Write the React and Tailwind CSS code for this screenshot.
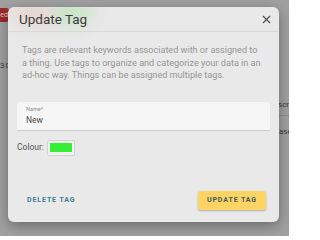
import { X } from 'lucide-react'

// Dialog "Update Tag" shown over a dimmed tag list
export default function App() {
  return (
    <div
      className="relative w-[289px] h-[236px] overflow-hidden bg-[#a1a1a1]"
      style={{ fontFamily: 'Roboto, "Liberation Sans", sans-serif' }}
    >
      {/* dimmed page behind */}
      <div className="flex items-start gap-[14px] pt-[8px]">
        <div className="w-[9px] h-[14px] rounded-r-[3px] bg-[#9c2a2a] text-[7px] leading-[14px] text-[#e7c9c9] text-right pr-[1px] overflow-hidden">
          ed
        </div>
        <div className="w-[30px] h-[14px] rounded-[4px] bg-[#b77a5a]" />
        <div className="w-[22px] h-[14px] rounded-[4px] bg-[#5fb45f] ml-[1px]" />
      </div>
      <div className="mt-[40px] text-[8px] leading-none text-[#3a3a3a] tracking-[1px]">30</div>
      <div className="absolute right-0 top-[101px] w-[10px] overflow-hidden text-[8px] text-[#3a3a3a] leading-none">
        <div className="-ml-[1px] whitespace-nowrap">scri</div>
        <div className="mt-[6px] h-px bg-[#8e8e8e]" />
        <div className="mt-[12px] whitespace-nowrap">ase</div>
      </div>

      {/* dialog */}
      <div className="absolute left-[8px] top-[7px] w-[271px] h-[215px] rounded-[6px] bg-[#e9e9e9] shadow-[0_4px_14px_rgba(0,0,0,0.35)] flex flex-col overflow-hidden">
        <div className="absolute left-[45px] -top-[10px] w-[40px] h-[30px] rounded-full bg-[#aee0a8] opacity-50 blur-[8px]" />
        <div className="absolute left-[5px] -top-[6px] w-[40px] h-[24px] rounded-full bg-[#e0b8a8] opacity-40 blur-[8px]" />
        <div className="relative h-[25px] flex items-center justify-between pl-[11px] pr-[6px] border-b border-[#d9d9d9]">
          <span className="text-[13.5px] leading-none text-[#3b3b3b] pt-[2px]">Update Tag</span>
          <X size={13} strokeWidth={2} className="text-[#4a4a4a] mt-[1px]" />
        </div>

        <p className="relative pt-[12px] px-[14px] text-[9.1px] leading-[12.5px] text-[#969696] whitespace-nowrap">
          Tags are relevant keywords associated with or assigned to
          <br />
          a thing. Use tags to organize and categorize your data in an
          <br />
          ad-hoc way. Things can be assigned multiple tags.
        </p>

        <div className="relative mt-[20px] mx-[9px] h-[29px] bg-[#f6f6f6] rounded-t-[3px] border-b border-[#cdcdcd] px-[9px] pt-[5px]">
          <div className="text-[5.5px] leading-none text-[#8d8d8d]">Name*</div>
          <div className="mt-[4px] text-[8.5px] leading-none text-[#4a4a4a]">New</div>
        </div>

        <div className="relative mt-[9px] ml-[9px] flex items-center gap-[3px]">
          <span className="text-[8.5px] leading-none text-[#555]">Colour:</span>
          <div className="w-[28px] h-[16px] border border-[#d2d2d2] bg-[#f1f1f1] rounded-[2px] flex items-center justify-center">
            <div className="w-[22px] h-[9px] bg-[#35ee35]" />
          </div>
        </div>

        <div className="relative mt-auto mb-[12px] flex items-center justify-between pl-[11px] pr-[13px]">
          <button className="h-[19px] px-[8px] text-[7px] font-bold tracking-[0.9px] text-[#3a7f92]">
            DELETE TAG
          </button>
          <button className="h-[19px] w-[68px] rounded-[3px] bg-[#ffd364] shadow-[0_1px_2px_rgba(0,0,0,0.25)] text-[7px] font-bold tracking-[0.9px] text-[#3e5b5c]">
            UPDATE TAG
          </button>
        </div>
      </div>
    </div>
  )
}
